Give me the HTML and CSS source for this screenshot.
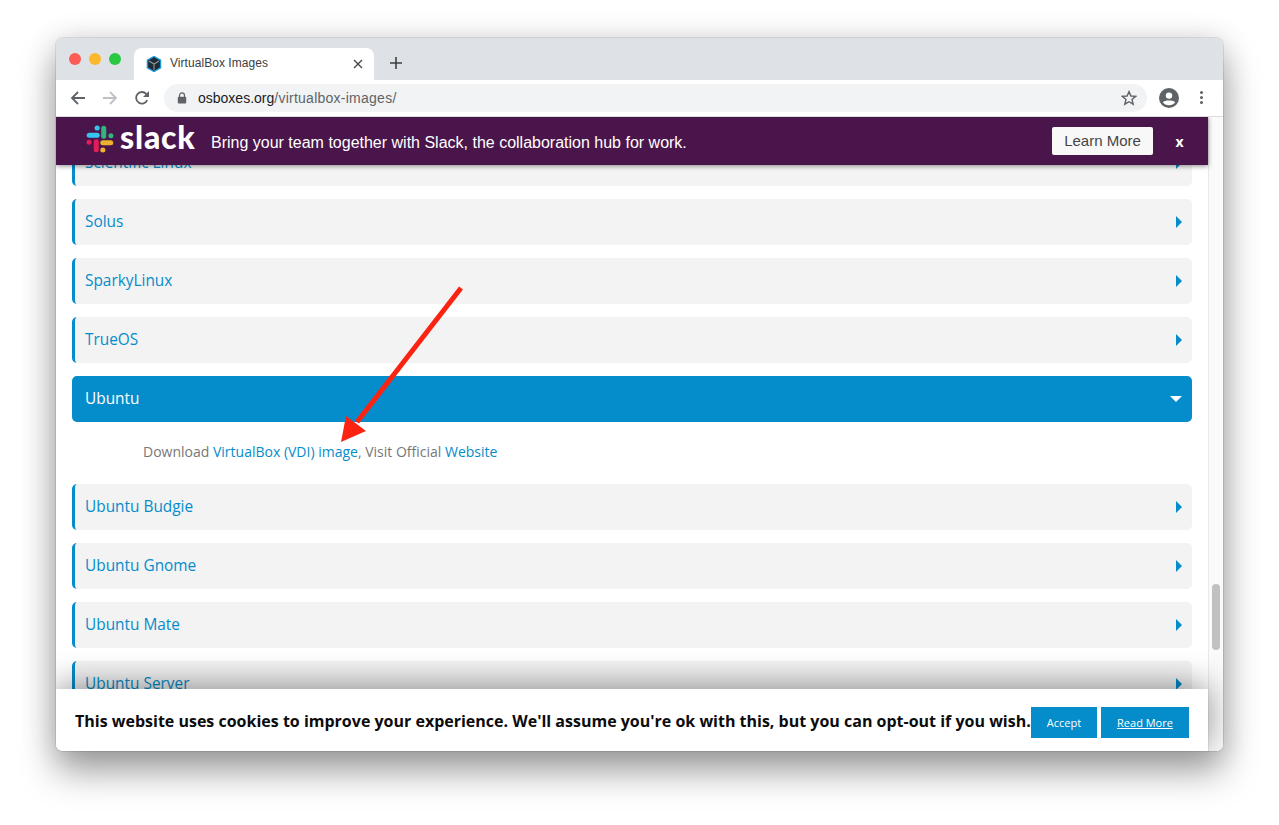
FILE: index.html
```html
<!DOCTYPE html>
<html lang="en">
<head>
<meta charset="utf-8">
<title>VirtualBox Images</title>
<link rel="stylesheet" href="styles.css">
</head>
<body>
<div class="window">
  <div class="tabstrip">
    <div class="lights"><span class="light red"></span><span class="light yellow"></span><span class="light green"></span></div>
    <div class="tab">
      <svg class="favicon" viewBox="0 0 16 16" width="16" height="16"><path d="M8 .5 14.6 4.2V11.8L8 15.5 1.4 11.8V4.2Z" fill="#1d2b36" stroke="#1f9ad6" stroke-width="1.4"/><path d="M3 5 8 8 13 5M8 8V14" fill="none" stroke="#8b99a3" stroke-width="1.1"/></svg>
      <span class="tab-title">VirtualBox Images</span>
      <svg class="tab-close" viewBox="0 0 10 10" width="10" height="10"><path d="M1 1 9 9M9 1 1 9" stroke="#45484c" stroke-width="1.4"/></svg>
    </div>
    <svg class="newtab" viewBox="0 0 12 12" width="12" height="12"><path d="M6 0V12M0 6H12" stroke="#3c4043" stroke-width="1.6"/></svg>
  </div>
  <div class="toolbar">
    <svg class="nav first" viewBox="0 0 16 16" width="16" height="16"><path d="M15 8H2M8 2 2 8 8 14" fill="none" stroke="#5f6368" stroke-width="1.8"/></svg>
    <svg class="nav" viewBox="0 0 16 16" width="16" height="16"><path d="M1 8H14M8 2 14 8 8 14" fill="none" stroke="#bdc1c6" stroke-width="1.8"/></svg>
    <svg class="nav" viewBox="0 0 16 16" width="16" height="16"><path d="M13.2 10.2A5.8 5.8 0 1 1 12.2 3.9L14.4 6" fill="none" stroke="#5f6368" stroke-width="1.8"/><path d="M15 1V7H9Z" fill="#5f6368"/></svg>
    <div class="omnibox">
      <svg class="lock" viewBox="0 0 10 12" width="10" height="12"><path d="M2.5 5V3.4a2.5 2.5 0 0 1 5 0V5" fill="none" stroke="#5f6368" stroke-width="1.2"/><rect x="0.8" y="4.8" width="8.4" height="6.7" rx="1" fill="#5f6368"/></svg>
      <span class="url"><span class="host">osboxes.org</span>/virtualbox-images/</span>
      <svg class="star" viewBox="0 0 16 16" width="16" height="16"><path d="M8 1.6 9.9 6 14.7 6.4 11 9.5 12.2 14.2 8 11.7 3.8 14.2 5 9.5 1.3 6.4 6.1 6Z" fill="none" stroke="#5f6368" stroke-width="1.4"/></svg>
    </div>
    <svg class="avatar" viewBox="0 0 20 20" width="20" height="20"><circle cx="10" cy="10" r="10" fill="#5f6368"/><circle cx="10" cy="7.6" r="3.2" fill="#fff"/><path d="M3.8 14.2C5.5 11.9 14.5 11.9 16.2 14.2 14.8 16.2 12.6 17.2 10 17.2S5.200 16.200 3.800 14.200Z" fill="#fff"/></svg>
    <span class="kebab"><i></i><i></i><i></i></span>
  </div>
  <div class="viewport">
    <div class="page">
      <div class="list">
        <div class="row"><span>Scientific Linux</span><i class="caret"></i></div>
        <div class="row"><span>Solus</span><i class="caret"></i></div>
        <div class="row"><span>SparkyLinux</span><i class="caret"></i></div>
        <div class="row"><span>TrueOS</span><i class="caret"></i></div>
        <div class="open-group">
          <div class="row active"><span>Ubuntu</span><i class="caret-down"></i></div>
          <p class="panel">Download <a href="#">VirtualBox (VDI) image</a>, Visit Official <a href="#">Website</a></p>
        </div>
        <div class="row"><span>Ubuntu Budgie</span><i class="caret"></i></div>
        <div class="row"><span>Ubuntu Gnome</span><i class="caret"></i></div>
        <div class="row"><span>Ubuntu Mate</span><i class="caret"></i></div>
        <div class="row"><span>Ubuntu Server</span><i class="caret"></i></div>
      </div>
    </div>
    <div class="scrollbar"><div class="thumb"></div></div>
    <div class="banner">
      <svg class="slack-mark" viewBox="0 0 30 30" width="28" height="28">
        <g stroke-width="5.4" stroke-linecap="round" fill="none">
          <path d="M3.500 11H12" stroke="#36c5f0"/><path d="M12 3.300H11.900" stroke="#36c5f0"/>
          <path d="M19 3.500V12" stroke="#2eb67d"/><path d="M26.700 11.500V11.600" stroke="#2eb67d"/>
          <path d="M18 19H26.500" stroke="#ecb22e"/><path d="M18 26.700H18.100" stroke="#ecb22e"/>
          <path d="M11 18V26.500" stroke="#e01e5a"/><path d="M3.300 18.500V18.400" stroke="#e01e5a"/>
        </g>
      </svg>
      <span class="slack-word">slack</span>
      <span class="banner-text">Bring your team together with Slack, the collaboration hub for work.</span>
      <a class="learn" href="#">Learn More</a>
      <span class="banner-x">x</span>
    </div>
    <div class="cookie">
      <span class="cookie-text">This website uses cookies to improve your experience. We'll assume you're ok with this, but you can opt-out if you wish.</span>
      <a class="cookie-btn accept" href="#">Accept</a>
      <a class="cookie-btn more" href="#">Read More</a>
    </div>
    <svg class="annotation" viewBox="0 0 140 170" width="140" height="170">
      <path d="M124 3 20 137" stroke="#fb2412" stroke-width="5" fill="none"/>
      <path d="M4 157 9 131 29 146Z" fill="#fb2412"/>
    </svg>
  </div>
</div>
</body>
</html>
```

FILE: styles.css
```css
* { box-sizing: border-box; }
html, body { margin: 0; height: 100%; }
body {
  background: #fff;
  padding: 38px 56px 0;
  overflow: hidden;
  font-family: "Open Sans", "Liberation Sans", sans-serif;
}
.window {
  width: 1167px;
  height: 713px;
  border-radius: 7px;
  overflow: hidden;
  background: #fff;
  box-shadow: 0 0 0 1px rgba(0,0,0,.09), 0 20px 36px rgba(0,0,0,.38), 0 0 30px rgba(0,0,0,.12);
  display: flex;
  flex-direction: column;
}
.tabstrip {
  height: 42px;
  background: #dee1e6;
  display: flex;
  align-items: flex-end;
  flex: none;
}
.lights { display: flex; gap: 8px; padding: 0 0 15px 13px; width: 78px; }
.light { width: 12px; height: 12px; border-radius: 50%; }
.red { background: #fc5b57; }
.yellow { background: #fcb72d; }
.green { background: #2ac840; }
.tab {
  width: 240px;
  height: 32px;
  background: #fff;
  border-radius: 8px 8px 0 0;
  display: flex;
  align-items: center;
  padding: 0 11px 2px 12px;
}
.favicon { flex: none; margin-top: 1px; }
.tab-title {
  font: 12px "Liberation Sans", sans-serif;
  color: #3c4043;
  margin-left: 8px;
  flex: 1;
  letter-spacing: .05px;
}
.tab-close { flex: none; margin-top: 1px; }
.newtab { margin: 0 0 11px 16px; }
.toolbar {
  height: 37px;
  flex: none;
  background: #fff;
  border-bottom: 1px solid #dadce0;
  display: flex;
  align-items: center;
}
.nav { margin-left: 16px; flex: none; }
.nav.first { margin-left: 14px; }
.omnibox {
  margin-left: 14px;
  width: 983px;
  height: 28px;
  margin-top: -1px;
  border-radius: 14px;
  background: #f1f3f4;
  display: flex;
  align-items: center;
  padding: 0 10px 0 13px;
}
.lock { flex: none; }
.url {
  font: 14px "Liberation Sans", sans-serif;
  color: #5f6368;
  margin-left: 11px;
  flex: 1;
  letter-spacing: .25px;
}
.host { color: #202124; letter-spacing: 0; }
.star { flex: none; }
.avatar { margin-left: 12px; flex: none; margin-top: -1px; }
.kebab { display: flex; flex-direction: column; gap: 2px; margin-left: 21px; margin-top: -1px; }
.kebab i { width: 3px; height: 3px; border-radius: 50%; background: #5f6368; display: block; }
.viewport { position: relative; flex: 1; overflow: hidden; background: #fff; }
.page { height: 100%; width: 1152px; padding: 23px 16px 0 16px; }
.list { display: flex; flex-direction: column; gap: 13px; }
.row {
  height: 46px;
  flex: none;
  background: #f3f3f3;
  border-left: 3px solid #058cca;
  border-radius: 5px;
  padding: 0 10px;
  display: flex;
  align-items: center;
  justify-content: space-between;
  font-size: 15.4px;
  color: #058cca;
}
.row span { margin-top: -2px; }
.row.active { background: #058cca; color: #fff; font-weight: 500; }
.caret { width: 0; height: 0; border-style: solid; border-width: 6px 0 6px 6px; border-color: transparent transparent transparent #058cca; }
.caret-down { width: 0; height: 0; border-style: solid; border-width: 6px 6px 0; border-color: #fff transparent transparent; }
.open-group { display: flex; flex-direction: column; }
.panel { margin: 0 0 -13px; height: 62px; padding: 20px 0 0 71px; font-size: 14px; line-height: 20px; color: #777; }
.panel a { color: #058cca; text-decoration: none; }
.scrollbar {
  position: absolute;
  top: 0; right: 0; bottom: 0;
  width: 15px;
  background: #fafafa;
  border-left: 1px solid #e9e9e9;
}
.thumb { position: absolute; top: 467px; left: 3px; width: 8px; height: 66px; border-radius: 4px; background: #c1c1c1; }
.banner {
  position: absolute;
  top: 0; left: 0;
  width: 1152px;
  height: 48px;
  background: #4a154b;
  box-shadow: 0 1px 5px rgba(0,0,0,.45);
  display: flex;
  align-items: center;
  color: #fff;
}
.slack-mark { margin: -4px 0 0 30px; flex: none; }
.slack-word { font: 900 32px/1 Lato, sans-serif; margin-left: 6px; letter-spacing: .8px; position: relative; top: -4px; width: 76px; flex: none; }
.banner-text { font: 16px "Liberation Sans", sans-serif; margin: 3px 0 0 15px; flex: 1; }
.learn {
  width: 101px;
  height: 28px;
  background: #f8f8f8;
  border-radius: 2px;
  color: #454545;
  font: 15px/28px "Liberation Sans", sans-serif;
  text-align: center;
  text-decoration: none;
}
.banner-x { width: 53px; margin-right: 2px; text-align: center; font: 700 14px "Open Sans", sans-serif; }
.cookie {
  position: absolute;
  left: 0; bottom: 0;
  width: 1152px;
  height: 62px;
  background: #fff;
  box-shadow: 0 -4px 32px rgba(0,0,0,.42);
  display: flex;
  align-items: center;
  padding: 2px 19px 0 19px;
}
.cookie-text { font-size: 16px; font-weight: 700; color: #0c0c0c; white-space: nowrap; flex: 1; }
.cookie-btn {
  height: 31px;
  margin-top: 3px;
  background: #058cca;
  color: #fff;
  font-size: 11px;
  line-height: 31px;
  text-align: center;
}
.accept { width: 66px; text-decoration: none; }
.more { width: 88px; margin-left: 4px; text-decoration: underline; }
.annotation { position: absolute; left: 281px; top: 168px; pointer-events: none; }
```
